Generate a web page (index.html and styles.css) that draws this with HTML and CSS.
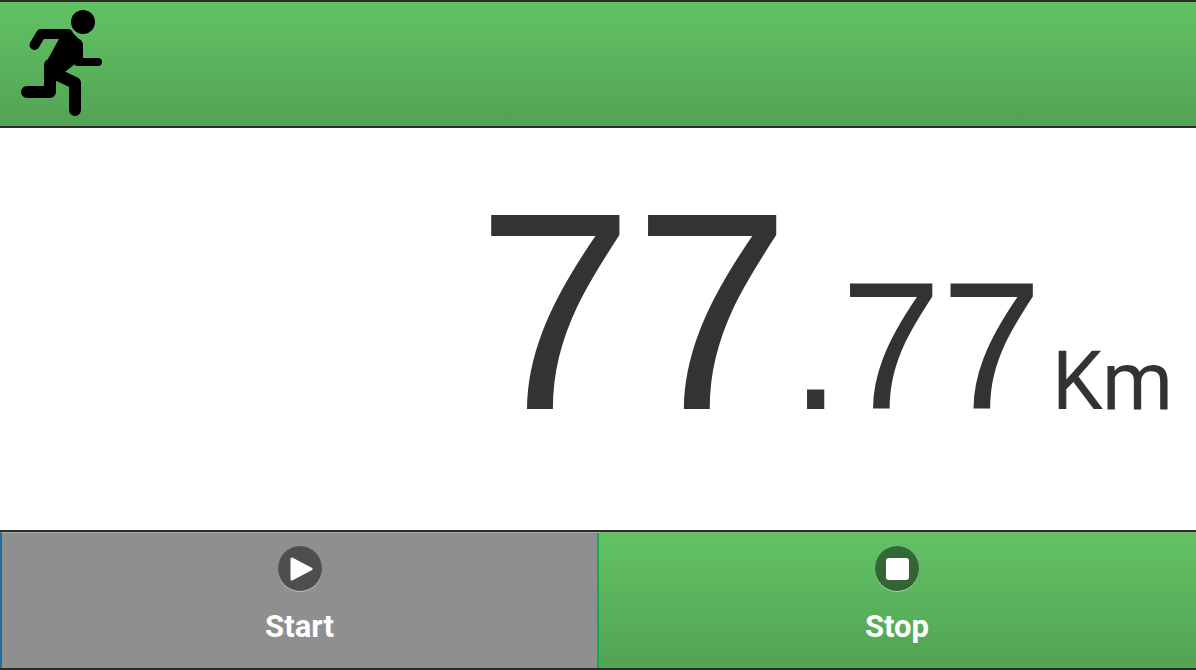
FILE: index.html
```html
<!DOCTYPE html>
<html lang="en">
  <head>
    <meta charset="UTF-8" />
    <title>Distance</title>
    <link rel="stylesheet" href="styles.css">
  </head>
  <body>
    <header class="header">
      <svg class="runner" width="86" height="108" viewBox="0 -1 86 108" fill="none" stroke="#000" stroke-linecap="round" stroke-linejoin="round">
        <circle cx="62" cy="11" r="12" fill="#000" stroke="none" />
        <path d="M13.5 34 L20 23 H47" stroke-width="10" />
        <path d="M57 32 V51 H77" stroke-width="8" />
        <path d="M29 54 V81 H6" stroke-width="12" />
        <path d="M37 64 L54 72 V99" stroke-width="12" />
        <path d="M43 23 L26 54 L37 64 L47 56 L60 46 V33 L49 22 Z" fill="#000" stroke-width="4" />
      </svg>
    </header>
    <main class="display">
      <span class="whole">77</span><span class="fraction">.77</span><span class="unit">Km</span>
    </main>
    <footer class="actions">
      <button class="action start" type="button">
        <span class="icon">
          <svg width="24" height="26" viewBox="0 0 24 26" fill="#fff" stroke="#fff" stroke-width="3" stroke-linejoin="round">
            <path d="M3 3 L22 13 L3 23 Z" />
          </svg>
        </span>
        <span class="label">Start</span>
      </button>
      <button class="action stop" type="button">
        <span class="icon">
          <span class="square"></span>
        </span>
        <span class="label">Stop</span>
      </button>
    </footer>
  </body>
</html>
```

FILE: styles.css
```css
* {
  margin: 0;
  padding: 0;
  box-sizing: border-box;
}

html,
body {
  height: 100%;
}

body {
  display: flex;
  flex-direction: column;
  overflow: hidden;
  background-color: #fff;
  font-family: Roboto, "Liberation Sans", sans-serif;
  color: #333;
}

.header {
  flex: none;
  display: flex;
  align-items: flex-start;
  height: 128px;
  padding: 8px 0 0 21px;
  border-top: 2px solid #2b2b2b;
  border-bottom: 2px solid #2b2b2b;
  background: linear-gradient(#63c265, #52a353);
}

.runner {
  filter: blur(0.6px);
}

.display {
  flex: 1;
  min-height: 0;
  display: flex;
  justify-content: flex-end;
  align-items: baseline;
  padding: 0 23px 0 0;
  line-height: 368px;
}

.whole {
  font-family: "Liberation Sans", sans-serif;
  font-size: 282px;
}

.fraction {
  font-family: "Liberation Sans", sans-serif;
  font-size: 181px;
}

.unit {
  margin-left: 10px;
  font-size: 81px;
}

.actions {
  flex: none;
  display: flex;
  height: 140px;
  border-top: 2px solid #2b2b2b;
  border-bottom: 2px solid #2b2b2b;
}

.action {
  display: flex;
  flex-direction: column;
  align-items: center;
  padding-top: 13px;
  border: none;
  border-top: 1px solid rgba(255, 255, 255, 0.25);
  font-family: inherit;
  color: #fff;
}

.start {
  flex: none;
  width: 597px;
  border-left: 2px solid #1f6f9f;
  background-color: #8f8f8f;
}

.stop {
  flex: 1;
  padding-right: 1px;
  border-left: 2px solid #0cad57;
  background: linear-gradient(#63c265, #52a353);
}

.icon {
  display: flex;
  align-items: center;
  justify-content: center;
  width: 44px;
  height: 45px;
  border-radius: 50%;
  box-shadow: 0 1px 0 rgba(255, 255, 255, 0.45);
  background-color: rgba(0, 0, 0, 0.45);
}

.start .icon svg {
  margin-left: 3px;
}

.square {
  width: 23px;
  height: 22px;
  border-radius: 3px;
  background-color: #fff;
}

.label {
  margin-top: 18px;
  font-size: 31px;
  font-weight: 700;
  line-height: 36px;
}
```
